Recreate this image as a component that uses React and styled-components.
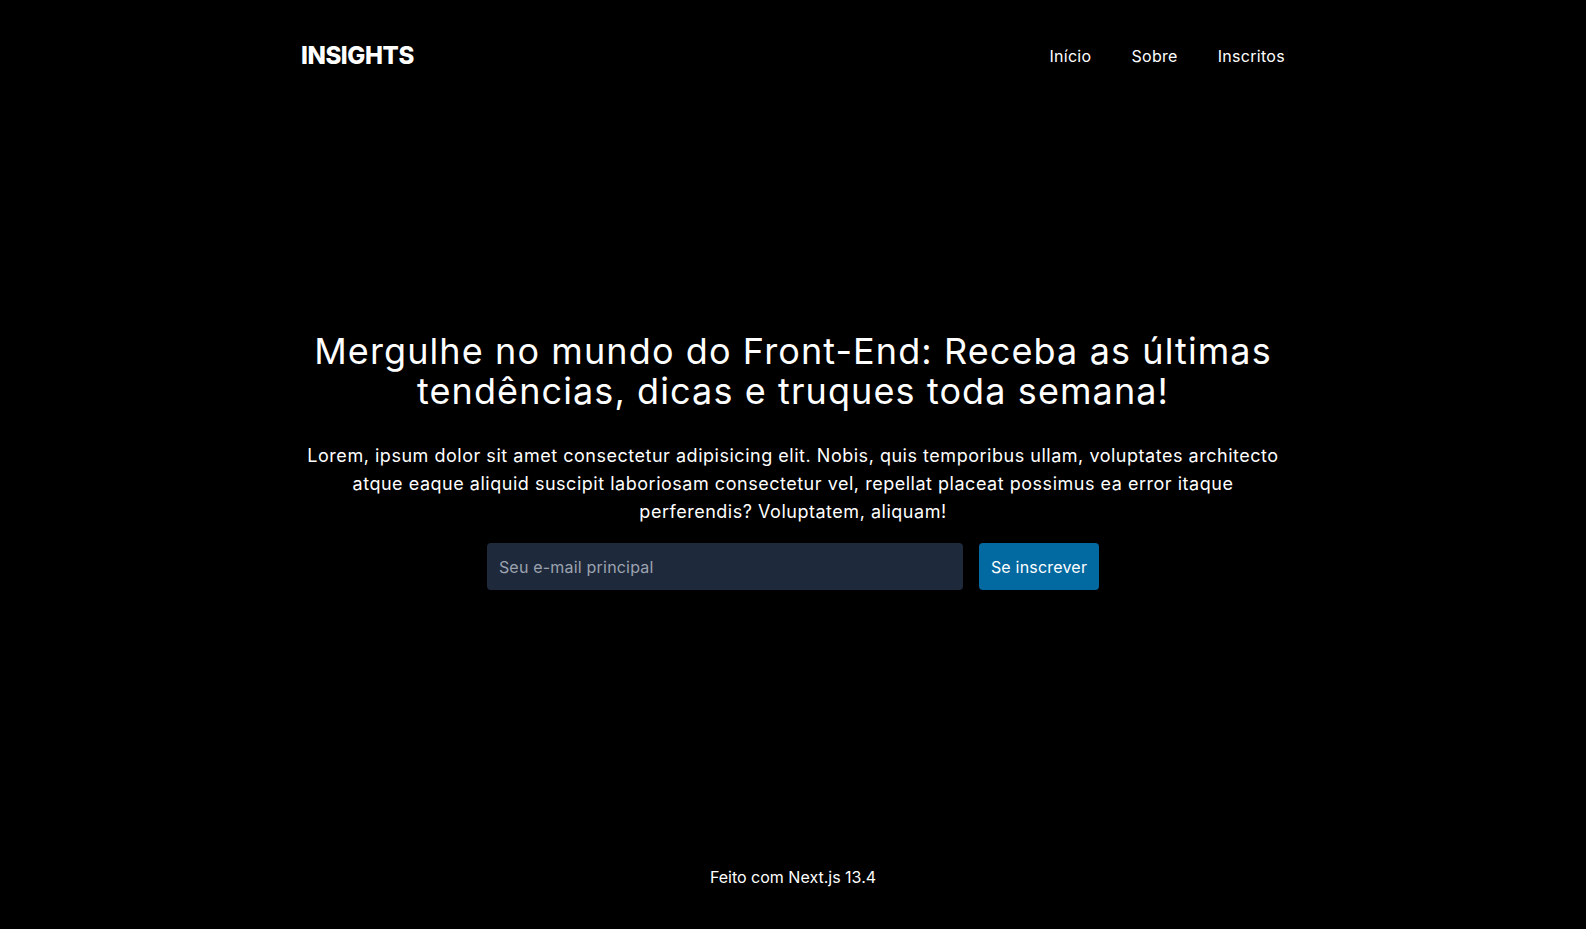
import React from "react"
import styled, { createGlobalStyle } from "styled-components"

const GlobalStyle = createGlobalStyle`
  * {
    box-sizing: border-box;
  }
  html, body {
    margin: 0;
    padding: 0;
    background: #000;
  }
  body {
    font-family: "Inter", "Noto Sans", sans-serif;
    color: #fff;
  }
`

const Page = styled.div`
  min-height: 929px;
  display: flex;
  flex-direction: column;
  background: #000;
`

const Header = styled.header`
  width: 100%;
  max-width: 1024px;
  margin: 0 auto;
  padding: 40px 20px;
  display: flex;
  align-items: center;
  justify-content: space-between;
`

const Logo = styled.a`
  font-size: 24px;
  line-height: 32px;
  font-weight: 800;
  text-transform: uppercase;
  letter-spacing: -0.4px;
  color: #fff;
  text-decoration: none;
`

const Nav = styled.nav`
  display: flex;
  gap: 40px;
`

const NavLink = styled.a`
  font-size: 16px;
  line-height: 24px;
  color: #fff;
  text-decoration: none;
  letter-spacing: 0.3px;
`

const Main = styled.main`
  flex: 1;
  display: flex;
  align-items: center;
  justify-content: center;
  padding: 0 20px 16px;
`

const Hero = styled.section`
  width: 100%;
  max-width: 984px;
  display: flex;
  flex-direction: column;
  align-items: center;
  text-align: center;
`

const Title = styled.h1`
  margin: 0 0 31px;
  font-size: 36px;
  line-height: 40px;
  font-weight: 400;
  letter-spacing: 1.1px;
`

const Lead = styled.p`
  margin: 0 0 17px;
  font-size: 18px;
  line-height: 28px;
  letter-spacing: 0.52px;
`

const Form = styled.form`
  display: flex;
  gap: 16px;
`

const EmailInput = styled.input`
  width: 476px;
  height: 47px;
  padding: 0 12px;
  border: none;
  border-radius: 4px;
  background: #1e293b;
  color: #fff;
  font-family: inherit;
  font-size: 16px;
  letter-spacing: 0.2px;
  outline: none;

  &::placeholder {
    color: #9ca3af;
  }
`

const SubmitButton = styled.button`
  height: 47px;
  padding: 0 12px;
  border: none;
  border-radius: 4px;
  background: #0369a1;
  color: #fff;
  font-family: inherit;
  font-size: 16px;
  letter-spacing: 0.2px;
  cursor: pointer;
`

const Footer = styled.footer`
  padding: 40px 20px;
  text-align: center;
  font-size: 16px;
  line-height: 24px;
  letter-spacing: 0;
`

const App = () => {
  return (
    <>
      <GlobalStyle />
      <Page>
        <Header>
          <Logo href="#">Insights</Logo>
          <Nav>
            <NavLink href="#">Início</NavLink>
            <NavLink href="#">Sobre</NavLink>
            <NavLink href="#">Inscritos</NavLink>
          </Nav>
        </Header>
        <Main>
          <Hero>
            <Title>
              Mergulhe no mundo do Front-End: Receba as últimas tendências,
              dicas e truques toda semana!
            </Title>
            <Lead>
              Lorem, ipsum dolor sit amet consectetur adipisicing elit. Nobis,
              quis temporibus ullam, voluptates architecto atque eaque aliquid
              suscipit laboriosam consectetur vel, repellat placeat possimus ea
              error itaque perferendis? Voluptatem, aliquam!
            </Lead>
            <Form onSubmit={(e) => e.preventDefault()}>
              <EmailInput type="email" placeholder="Seu e-mail principal" />
              <SubmitButton type="submit">Se inscrever</SubmitButton>
            </Form>
          </Hero>
        </Main>
        <Footer>Feito com Next.js 13.4</Footer>
      </Page>
    </>
  )
}

export default App
